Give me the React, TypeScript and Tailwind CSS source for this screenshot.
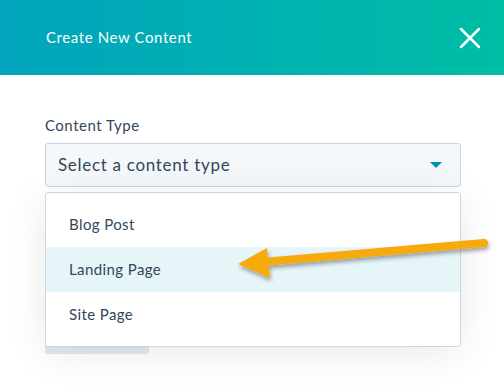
import { X } from "lucide-react";

const items = ["Blog Post", "Landing Page", "Site Page"];

export default function App() {
  return (
    <div className="relative h-[387px] w-[504px] overflow-hidden bg-white font-['Lato','Noto_Sans',sans-serif] text-[#33475b]">
      <header className="flex h-[75px] items-center justify-between bg-gradient-to-r from-[#00a4bd] to-[#00bda5] pl-[46px] pr-[16px]">
        <h1 className="text-[15px] tracking-[0.6px] text-white">Create New Content</h1>
        <X className="h-[36px] w-[36px] text-white" strokeWidth={1.7} />
      </header>

      <div className="pl-[45px] pr-[43px] pt-[40px]">
        <label className="block text-[15px] leading-[20px] tracking-[0.5px]">Content Type</label>
        <div className="relative mt-[8px]">
          <div className="flex h-[44px] items-center justify-between rounded-[3px] border border-[#cbd6e2] bg-[#f5f8fa] pl-[12px] pr-[18px]">
            <span className="text-[17px] tracking-[0.7px]">Select a content type</span>
            <span className="h-0 w-0 border-x-[6.5px] border-t-[6px] border-x-transparent border-t-[#0091ae]" />
          </div>

          <div className="mt-[119px] h-[48px] w-[104px] rounded-[3px] bg-[#e3e8f0]" />

          <ul className="absolute left-0 right-0 top-[49px] z-10 rounded-[3px] border border-[#cbd6e2] bg-white py-[9px] shadow-[0_6px_40px_rgba(0,0,0,0.09)]">
            {items.map((item, i) => (
              <li
                key={item}
                className={`flex h-[45px] items-center px-[23px] text-[15px] tracking-[0.4px] ${i === 1 ? "bg-[#e5f5f8]" : ""}`}
              >
                {item}
              </li>
            ))}
          </ul>
        </div>
      </div>

      {/* annotation arrow */}
      <svg className="absolute left-0 top-0 z-20" width="504" height="387" viewBox="0 0 504 387">
        <defs>
          <filter id="sh" x="-10%" y="-50%" width="120%" height="200%">
            <feDropShadow dx="1" dy="3" stdDeviation="2" floodColor="#000" floodOpacity="0.35" />
          </filter>
        </defs>
        <g filter="url(#sh)">
          <line x1="484" y1="243" x2="262" y2="262" stroke="#f6aa0c" strokeWidth="8" strokeLinecap="round" />
          <polygon points="238,264 267,248 270,278" fill="#f6aa0c" />
        </g>
      </svg>
    </div>
  );
}
